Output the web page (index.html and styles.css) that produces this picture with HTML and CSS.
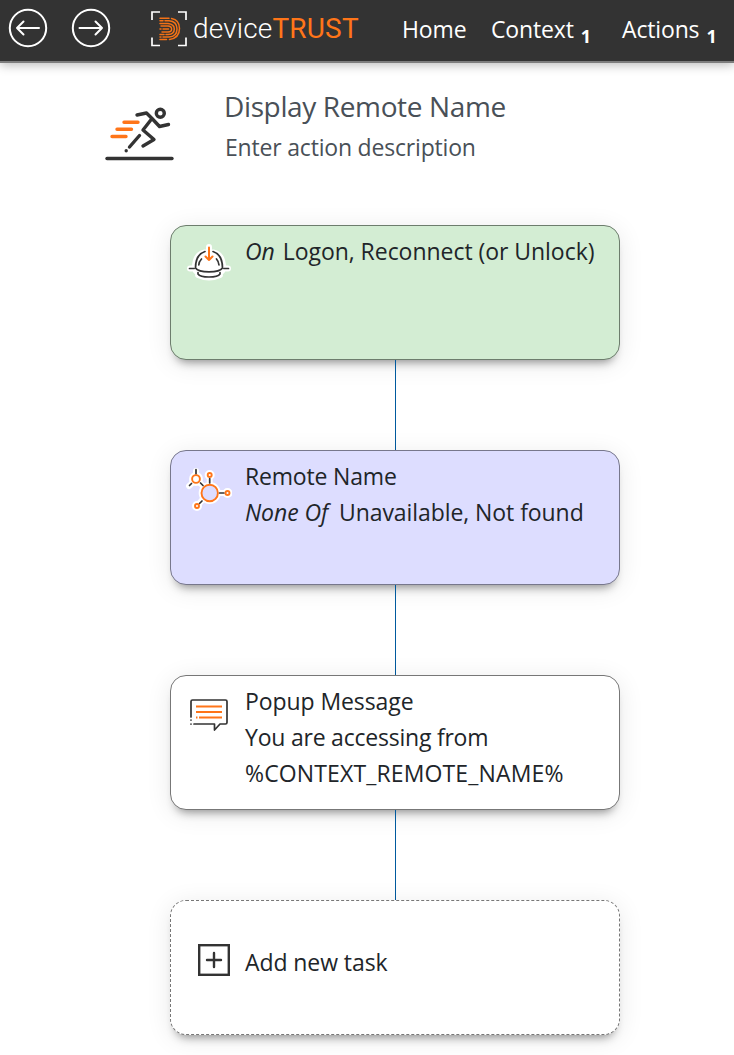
FILE: index.html
```html
<!DOCTYPE html>
<html lang="en">
<head>
<meta charset="utf-8">
<title>deviceTRUST</title>
<link rel="stylesheet" href="styles.css">
</head>
<body>
<header class="topbar">
  <svg class="nav-arrow" viewBox="0 0 40 40"><circle cx="20" cy="20" r="18.2"/><path d="M31 20H9M15.500 13.500L9 20L15.500 26.500"/></svg>
  <svg class="nav-arrow" viewBox="0 0 40 40"><circle cx="20" cy="20" r="18.2"/><path d="M8.500 20H31M24.500 13.500L31 20L24.500 26.500"/></svg>
  <div class="brand">
    <svg class="brand-mark" viewBox="0 0 36 36">
      <path class="frame" d="M9 1H1V9M27 1H35V9M9 34.500H1V26.500M27 34.500H35V26.500"/>
      <g class="print">
        <path d="M9 7.200H18M20.500 7.500Q28.500 9 28.500 17.500Q28.500 27 18.500 28.500M15.500 28.500H9"/>
        <path d="M9 9.800H12M14 9.800H18Q26 10.500 26 18Q26 25.500 18 26H12M10 26H9"/>
        <path d="M9 12.400H17Q23.300 13 23.300 18Q23.300 23.300 17 23.500H15M13 23.500H9"/>
        <path d="M10 15H17Q20.600 15.200 20.600 18Q20.600 21 17 21H11"/>
        <path d="M9 18H10M12 18H17.500"/>
      </g>
    </svg>
    <span class="brand-name">device<b>TRUST</b></span>
  </div>
  <nav class="menu">
    <a class="home">Home</a>
    <a class="context">Context<sub>1</sub></a>
    <a class="actions">Actions<sub>1</sub></a>
  </nav>
</header>
<main>
  <section class="heading">
    <svg class="runner" viewBox="0 0 70 56">
      <g class="dark" stroke-width="3.400">
        <path d="M2 52.500H67"/><circle cx="55.300" cy="7.300" r="4"/>
        <path d="M32 9L41.500 7L47 12.500L54.500 20.500L63.500 18.500M47 12.500L38 24L49 33.500L38 40M34.500 29.500L24.500 41M21.200 44.700V44.800"/>
      </g>
      <path class="orange" stroke-width="3.400" d="M19 16.300H33M12 23.300H26.500M7 30.500H21"/>
    </svg>
    <div>
      <h1>Display Remote Name</h1>
      <p class="description">Enter action description</p>
    </div>
  </section>
  <section class="flow">
    <article class="card trigger">
      <svg class="icon" viewBox="0 0 46 46">
        <path class="halo" d="M4 25.500H42M9 25Q9 9 23 9Q37 9 37 25Q37 28 34 29.500V32Q23 37 12 32V29.500Q9 28 9 25ZM23 4V9"/>
        <g class="dark" stroke-width="1.700"><path d="M3.500 25.500H8M38 25.500H42.500M19 8.500Q9.500 11.500 9.500 25Q12 28.800 23 28.800Q34 28.800 36.500 25Q36.500 11.500 27 8.500M12 29.500V31Q14 34 23 34Q32 34 34 31V29.500M15.500 16Q13 18.500 12.800 22M30.500 16Q32.700 18.500 33 22"/></g>
        <path class="orange" stroke-width="2" d="M23 4.500V17M19.500 13.500L23 17L26.500 13.500"/>
      </svg>
      <p class="text"><span class="l1"><i>On</i> Logon, Reconnect (or Unlock)</span></p>
    </article>
    <div class="connector"></div>
    <article class="card condition">
      <svg class="icon" viewBox="0 0 46 46">
        <g class="halo"><path d="M10 5V10M3 20L7 16.500M13 16L19 22M23.700 14V21M33 27H37M17 33L12 39"/><circle cx="10" cy="13" r="4"/><circle cx="23.700" cy="9" r="2"/><circle cx="23.700" cy="27" r="8"/><circle cx="41.500" cy="27" r="2"/><circle cx="11" cy="40" r="2"/></g>
        <path class="dark" stroke-width="1.700" d="M10 3.500V8M3.500 19.500L5.500 17.500M14.500 17L17 19.500M23.700 12.500V17M33.500 27H38M16 35L13.500 37.500"/>
        <g class="orange" stroke-width="1.900"><circle cx="10" cy="13" r="3.900"/><circle cx="23.700" cy="9" r="2"/><circle class="hub" cx="23.700" cy="27" r="8.200"/><circle cx="41.500" cy="27" r="2"/><circle cx="11" cy="40" r="2"/></g>
      </svg>
      <p class="text"><span class="l2">Remote Name</span><br><span class="l3"><i>None Of</i> Unavailable, Not found</span></p>
    </article>
    <div class="connector"></div>
    <article class="card message">
      <svg class="icon" viewBox="0 0 46 46">
        <path class="dark" stroke-width="1.700" d="M5 21V5.500Q5 4 6.500 4H39.500Q41 4 41 5.500V26.500Q41 28 39.500 28H34L28.500 34V28H8M5 24V24.100M5 28V28.100"/>
        <path class="orange butt" stroke-width="2" d="M10 10.500H36M10 16H36M10 21.500H11.500M13 21.500H36"/>
      </svg>
      <p class="text"><span class="l4">Popup Message</span><br><span class="l5">You are accessing from</span><br><span class="l6">%CONTEXT_REMOTE_NAME%</span></p>
    </article>
    <div class="connector"></div>
    <article class="card add">
      <svg class="plus" viewBox="0 0 32 32"><rect x="1.200" y="1.200" width="29.600" height="29.600"/><path d="M9 16H23M16 9V23"/></svg>
      <p class="text"><span class="l7">Add new task</span></p>
    </article>
  </section>
</main>
</body>
</html>
```
FILE: styles.css
```css
* { box-sizing: border-box; }
body { margin: 0; min-height: 1055px; background: #fff; color: #212529; font-family: "Segoe UI", "Open Sans", sans-serif; font-size: 23px; }
h1, p { margin: 0; font-weight: 400; }
svg { display: block; flex: none; fill: none; stroke-linecap: round; stroke-linejoin: round; }
.topbar { height: 63px; display: flex; align-items: flex-start; background: #333; border-bottom: 2px solid #7d7d7d; box-shadow: 0 2px 10px rgba(0,0,0,.28); color: #fff; padding: 8px 0 0 8px; }
.nav-arrow { width: 40px; height: 40px; margin-right: 23px; stroke: #fff; stroke-width: 2; }
.brand { display: flex; margin-left: 17px; width: 252px; }
.brand-mark { width: 36px; height: 36px; margin-top: 3px; }
.frame { stroke: #fff; stroke-width: 1.7; stroke-linecap: butt; stroke-linejoin: miter; }
.print { stroke: #f47216; stroke-width: 1.5; }
.brand-name { font: 300 28px/42px Roboto, sans-serif; letter-spacing: .16px; margin-left: 6px; white-space: nowrap; }
.brand-name b { color: #ff7519; font-weight: 400; }
.menu { display: flex; line-height: 43px; white-space: nowrap; letter-spacing: -.15px; }
.home { width: 88px; margin-left: -1px; }
.context { width: 131px; margin-left: 1px; }
sub { font-size: 18px; font-weight: 700; line-height: 0; vertical-align: -5px; margin-left: 7px; }
.heading { display: flex; height: 162px; padding-left: 105px; color: #495057; }
.runner { width: 70px; height: 56px; margin-top: 43px; margin-right: 49px; }
h1 { font-size: 28px; line-height: 38px; margin-top: 24px; letter-spacing: -.37px; white-space: nowrap; }
.description { line-height: 36px; margin: 4px 0 0 1px; letter-spacing: -.19px; white-space: nowrap; }
.dark { stroke: #333; }
.orange { stroke: #ff7519; }
.butt { stroke-linecap: butt; }
.halo { fill: #fff; stroke: #fff; stroke-width: 6; }
.flow { width: 450px; margin-left: 170px; }
.card { height: 135px; display: flex; padding: 7px 0 0 15px; background: #fff; border: 1px solid #777; border-radius: 16px; box-shadow: 0 8px 10px -6px rgba(0,0,0,.42), 0 4px 26px rgba(0,0,0,.09); }
.trigger { background: #d3edd3; border-color: #6d7d6d; }
.condition { background: #ddf; border-color: #77778c; }
.condition .hub { fill: #ddf; }
.icon { width: 46px; height: 46px; margin: 10px 13px 0 0; }
.condition .icon { margin-top: 8px; }
.message .icon { margin-top: 13px; }
.text { line-height: 36px; white-space: nowrap; }
.l1 { letter-spacing: -.04px; }
.l1 i { margin-right: 2px; }
.l2 { letter-spacing: -.18px; }
.l3 { letter-spacing: -.07px; }
.l3 i { margin-right: 5px; }
.l4, .l7 { letter-spacing: -.08px; }
.l5 { letter-spacing: -.22px; }
.l6 { letter-spacing: .14px; }
.connector { width: 1px; height: 90px; margin-left: 225px; background: #005a9e; }
.add { border-style: dashed; padding: 43px 0 0 27px; }
.plus { width: 32px; height: 32px; margin-right: 15px; stroke: #333; stroke-width: 2.4; stroke-linejoin: miter; }
```
